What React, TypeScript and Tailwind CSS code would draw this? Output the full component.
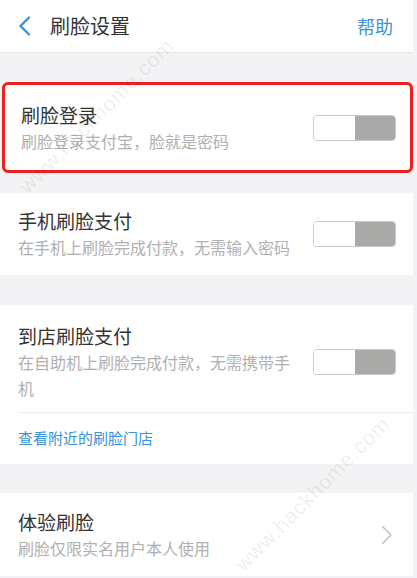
import React from "react";

function Toggle() {
  return (
    <div className="flex h-[26px] w-[83px] shrink-0 overflow-hidden rounded-[4px] border-[1.5px] border-[#c9c9c9]">
      <div className="w-[41px] bg-white" />
      <div className="flex-1 bg-[#a9aaa7]" />
    </div>
  );
}

function SwitchRow({ title, desc }: { title: string; desc: string }) {
  return (
    <div className="flex items-center pl-[18px] pr-[17px]">
      <div className="w-[280px]">
        <div className="text-[19px] leading-[26px] text-[#333333]">{title}</div>
        <div className="text-[16px] leading-[26px] text-[#b0b0b0]">{desc}</div>
      </div>
      <div className="ml-auto">
        <Toggle />
      </div>
    </div>
  );
}

export default function App() {
  return (
    <div className="relative h-[578px] w-[417px] overflow-hidden bg-[#f3f3f5] pr-[4px] font-['Noto_Sans_CJK_SC',sans-serif]">
      {/* header */}
      <header className="flex h-[53px] items-center border-b border-[#e6e6e8] bg-white">
        <svg className="ml-[18px]" width="13" height="20" viewBox="0 0 13 20" fill="none">
          <path d="M11 1.5 L2.5 10 L11 18.5" stroke="#3a92dc" strokeWidth="2.4" strokeLinecap="round" strokeLinejoin="round" />
        </svg>
        <h1 className="ml-[19px] text-[20px] text-[#333333]">刷脸设置</h1>
        <span className="ml-auto mr-[20px] text-[18px] text-[#3a92dc]">帮助</span>
      </header>

      {/* 刷脸登录 */}
      <section className="ml-[2px] mt-[29px] flex h-[91px] items-center rounded-[6px] border-[3px] border-[#f21d1d] bg-white">
        <div className="-ml-[2px] -mr-[3px] flex-1">
          <SwitchRow title="刷脸登录" desc="刷脸登录支付宝，脸就是密码" />
        </div>
      </section>

      {/* 手机刷脸支付 */}
      <section className="mt-[20px] flex h-[82px] items-center bg-white">
        <div className="flex-1">
          <SwitchRow title="手机刷脸支付" desc="在手机上刷脸完成付款，无需输入密码" />
        </div>
      </section>

      {/* 到店刷脸支付 */}
      <section className="mt-[30px] bg-white">
        <div className="pb-[11px] pt-[18px]">
          <SwitchRow title="到店刷脸支付" desc="在自助机上刷脸完成付款，无需携带手机" />
        </div>
        <div className="ml-[18px] border-t border-[#ececec]" />
        <div className="flex h-[51px] items-center pl-[18px] text-[15px] text-[#3a92dc]">查看附近的刷脸门店</div>
      </section>

      {/* 体验刷脸 */}
      <section className="mt-[29px] flex h-[83px] items-center bg-white pl-[18px] pr-[20px]">
        <div>
          <div className="text-[19px] leading-[26px] text-[#333333]">体验刷脸</div>
          <div className="text-[16px] leading-[26px] text-[#b0b0b0]">刷脸仅限实名用户本人使用</div>
        </div>
        <svg className="ml-auto" width="12" height="20" viewBox="0 0 12 20" fill="none">
          <path d="M1.5 1.5 L10 10 L1.5 18.5" stroke="#c4c4c4" strokeWidth="1.6" strokeLinecap="round" strokeLinejoin="round" />
        </svg>
      </section>

      {/* watermarks */}
      <div className="pointer-events-none absolute left-[-8px] top-[100px] -rotate-45 font-['Liberation_Sans',sans-serif] text-[21px] tracking-[1px] text-black/[0.08]">
        www.hackhome.com
      </div>
      <div className="pointer-events-none absolute left-[208px] top-[478px] -rotate-45 font-['Liberation_Sans',sans-serif] text-[21px] tracking-[1px] text-black/[0.08]">
        www.hackhome.com
      </div>
    </div>
  );
}
